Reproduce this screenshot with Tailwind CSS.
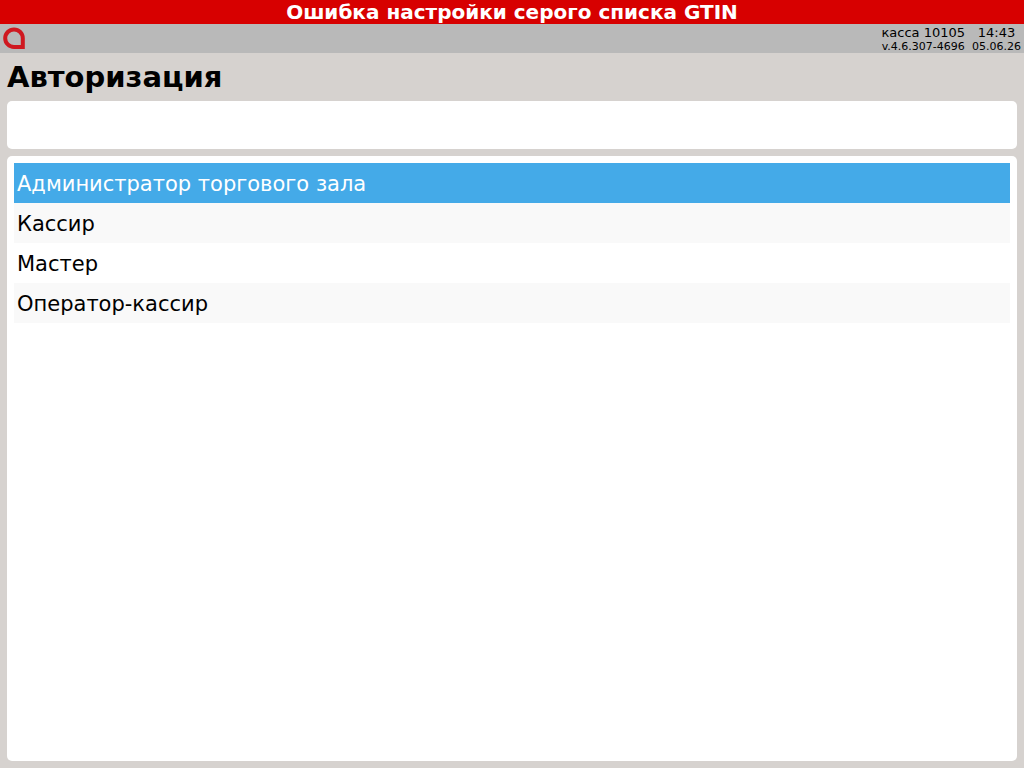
<!DOCTYPE html>
<html lang="ru">
<head>
  <meta charset="UTF-8">
  <meta name="viewport" content="width=device-width, initial-scale=1.0">
  <title>Авторизация</title>
  <script src="https://cdn.jsdelivr.net/npm/@tailwindcss/browser@4"></script>
</head>
<body class="flex min-h-screen flex-col bg-[#d6d2cf] font-['DejaVu_Sans','Noto_Sans',sans-serif] text-black">

  <div role="alert" class="bg-[#d70000] text-center text-[20px] leading-6 font-bold text-white">Ошибка настройки серого списка GTIN</div>

  <header class="flex h-[29px] items-center justify-between bg-[#b9b9b9] px-[3px]">
    <svg class="size-[23px]" viewBox="0 0 23 23" fill="none" stroke="#cf1820" stroke-width="4" aria-hidden="true">
      <path d="M11 2.4A8.8 8.8 0 1 0 11 20H19.8V11.2A8.8 8.8 0 0 0 11 2.4Z"/>
    </svg>
    <div class="flex gap-[7px] text-center text-[11px] leading-3">
      <div>
        <p class="text-[13px] leading-4">касса 10105</p>
        <p>v.4.6.307-4696</p>
      </div>
      <div>
        <p class="text-[13px] leading-4">14:43</p>
        <p>05.06.26</p>
      </div>
    </div>
  </header>

  <main class="flex grow flex-col px-[7px] pb-[7px]">
    <h1 class="text-[29px] leading-[48px] font-bold"><label for="login">Авторизация</label></h1>
    <input type="password" id="login" class="mb-[7px] h-12 w-full rounded-[5px] bg-white px-2 text-[21px] outline-none">

    <ul class="grow rounded-[5px] bg-white p-[7px] text-[21px] leading-[38px]">
      <li><button type="button" class="block w-full bg-[#44aae8] px-[3px] pt-[2px] text-left text-white">Администратор торгового зала</button></li>
      <li><button type="button" class="block w-full bg-[#f9f9f9] px-[3px] pt-[2px] text-left">Кассир</button></li>
      <li><button type="button" class="block w-full bg-white px-[3px] pt-[2px] text-left">Мастер</button></li>
      <li><button type="button" class="block w-full bg-[#f9f9f9] px-[3px] pt-[2px] text-left">Оператор-кассир</button></li>
    </ul>
  </main>

</body>
</html>
